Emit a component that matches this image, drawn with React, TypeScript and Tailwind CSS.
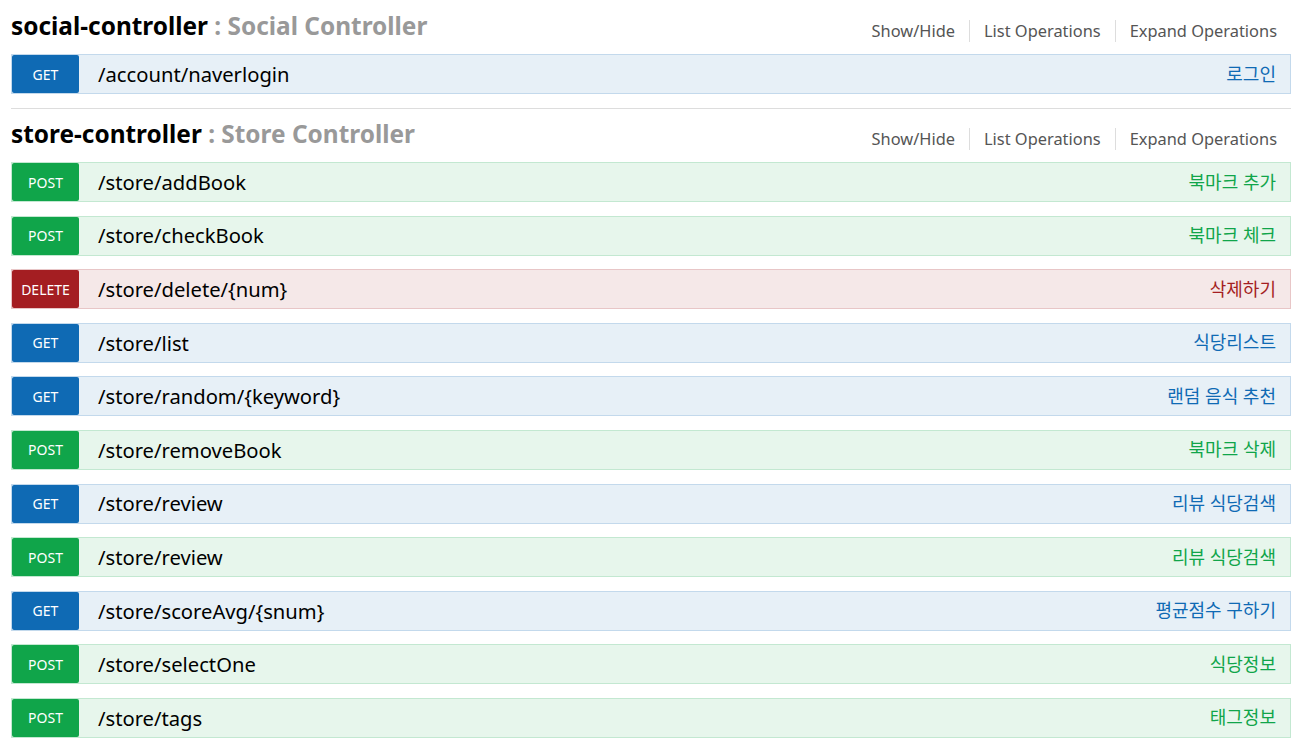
import React from 'react';

type Method = 'GET' | 'POST' | 'DELETE';

interface Operation {
    method: Method;
    path: string;
    summary: string;
}

interface Resource {
    name: string;
    description: string;
    operations: Operation[];
}

const resources: Resource[] = [
    {
        name: 'social-controller',
        description: 'Social Controller',
        operations: [{ method: 'GET', path: '/account/naverlogin', summary: '로그인' }],
    },
    {
        name: 'store-controller',
        description: 'Store Controller',
        operations: [
            { method: 'POST', path: '/store/addBook', summary: '북마크 추가' },
            { method: 'POST', path: '/store/checkBook', summary: '북마크 체크' },
            { method: 'DELETE', path: '/store/delete/{num}', summary: '삭제하기' },
            { method: 'GET', path: '/store/list', summary: '식당리스트' },
            { method: 'GET', path: '/store/random/{keyword}', summary: '랜덤 음식 추천' },
            { method: 'POST', path: '/store/removeBook', summary: '북마크 삭제' },
            { method: 'GET', path: '/store/review', summary: '리뷰 식당검색' },
            { method: 'POST', path: '/store/review', summary: '리뷰 식당검색' },
            { method: 'GET', path: '/store/scoreAvg/{snum}', summary: '평균점수 구하기' },
            { method: 'POST', path: '/store/selectOne', summary: '식당정보' },
            { method: 'POST', path: '/store/tags', summary: '태그정보' },
        ],
    },
];

// per-method colours, swagger-ui style
const styles: Record<Method, { row: string; badge: string; summary: string }> = {
    GET: {
        row: 'bg-[#e7f0f7] border-[#c3d9ec]',
        badge: 'bg-[#0f6ab4]',
        summary: 'text-[#0f6ab4]',
    },
    POST: {
        row: 'bg-[#e7f6ec] border-[#c3e8d1]',
        badge: 'bg-[#10a54a]',
        summary: 'text-[#10a54a]',
    },
    DELETE: {
        row: 'bg-[#f5e8e8] border-[#e8c6c7]',
        badge: 'bg-[#a41e22]',
        summary: 'text-[#a41e22]',
    },
};

const OperationRow: React.FC<{ op: Operation }> = ({ op }) => {
    const s = styles[op.method];
    return (
        <div className={`flex h-[40px] items-stretch border ${s.row}`}>
            <span className={`flex w-[67px] items-center justify-center rounded-[2px] text-[14px] text-white ${s.badge}`}>
                {op.method}
            </span>
            <span className="ml-[19px] flex items-center text-[20.2px] text-black">{op.path}</span>
            <span className={`ml-auto flex items-center pr-[14px] text-[18px] ${s.summary}`}>{op.summary}</span>
        </div>
    );
};

const ResourceBlock: React.FC<{ resource: Resource; first: boolean }> = ({ resource, first }) => (
    <div className={`pb-[14px] ${first ? '' : 'border-t border-[#dddddd]'}`}>
        <div className={`flex items-start justify-between ${first ? 'h-[54px]' : 'h-[53px]'}`}>
            <h2 className={`text-[24.4px] font-bold leading-[32px] ${first ? 'mt-[10px]' : 'mt-[9px]'}`}>
                <span className="text-black">{resource.name}</span>
                <span className="text-[#999999]"> : {resource.description}</span>
            </h2>
            <ul className={`flex text-[16.4px] text-[#555555] ${first ? 'mt-[20px]' : 'mt-[19px]'}`}>
                {['Show/Hide', 'List Operations', 'Expand Operations'].map((label, i) => (
                    <li
                        key={label}
                        className={`h-[22px] px-[14px] leading-[22px] ${i < 2 ? 'border-r border-[#dddddd]' : ''}`}
                    >
                        {label}
                    </li>
                ))}
            </ul>
        </div>
        <div className="flex flex-col gap-[13.6px]">
            {resource.operations.map((op, i) => (
                <OperationRow key={i} op={op} />
            ))}
        </div>
    </div>
);

export default function App() {
    return (
        <div
            className="min-h-screen bg-white pl-[11px] pr-[13px]"
            style={{ fontFamily: '"Noto Sans", "Noto Sans CJK KR", sans-serif' }}
        >
            {resources.map((r, i) => (
                <ResourceBlock key={r.name} resource={r} first={i === 0} />
            ))}
        </div>
    );
}
